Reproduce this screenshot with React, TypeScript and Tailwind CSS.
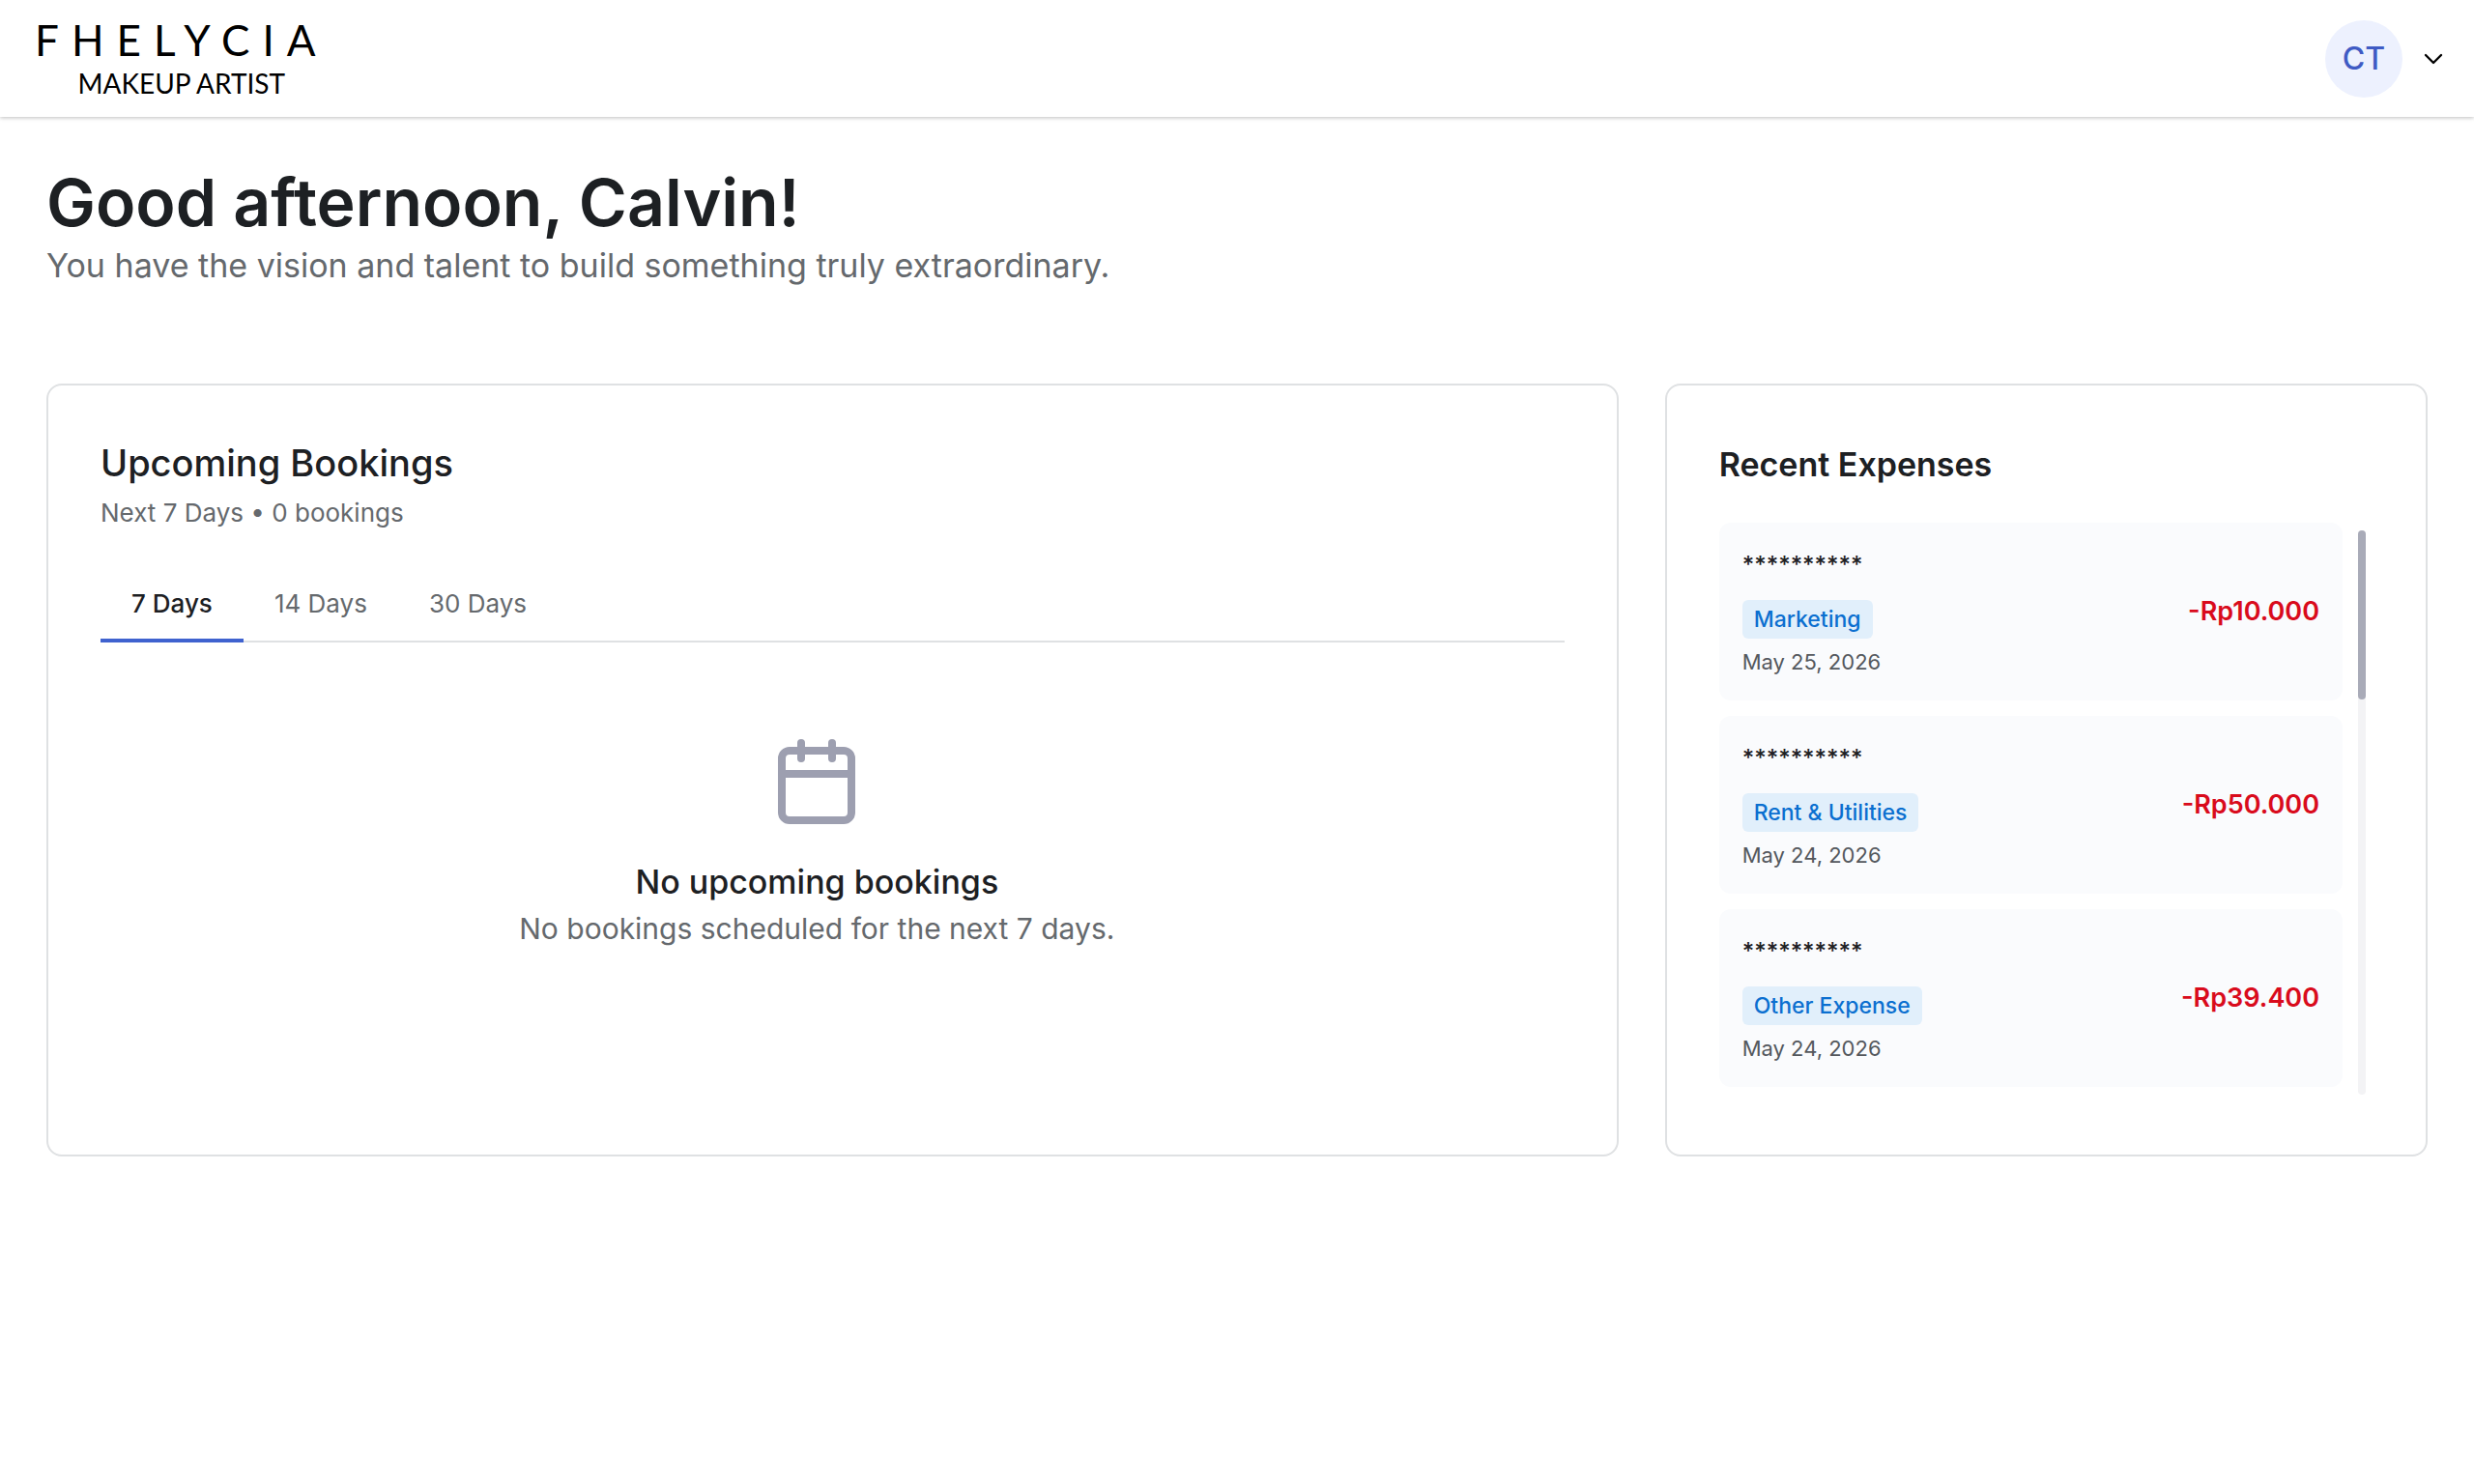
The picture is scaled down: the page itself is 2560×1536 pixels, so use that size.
import React, { useState } from "react";
import { Calendar, ChevronDown } from "lucide-react";

interface Expense {
  id: number;
  name: string;
  category: string;
  date: string;
  amount: string;
}

const RANGES = [7, 14, 30];

const EXPENSES: Expense[] = [
  { id: 1, name: "**********", category: "Marketing", date: "May 25, 2026", amount: "-Rp10.000" },
  { id: 2, name: "**********", category: "Rent & Utilities", date: "May 24, 2026", amount: "-Rp50.000" },
  { id: 3, name: "**********", category: "Other Expense", date: "May 24, 2026", amount: "-Rp39.400" },
];

const card = "rounded-2xl border-2 border-[#dfe1e3] bg-white p-[54px]";

const Header: React.FC = () => (
  <header className="flex h-[121px] items-center justify-between bg-white pl-9 pr-[26px] shadow-[0_1px_4px_rgba(0,0,0,0.25)]">
    <a href="#" className="flex flex-col items-center font-['Lato',sans-serif] text-black">
      <span className="text-[44px] leading-[50px] tracking-[13px]">FHELYCIA</span>
      <span className="text-[28px] leading-10">MAKEUP ARTIST</span>
    </a>
    <button type="button" aria-label="Account menu" className="flex items-center gap-4">
      <span className="flex size-20 items-center justify-center rounded-full bg-[#edf1fe] text-[32px] font-medium text-[#3f5bc4]">
        CT
      </span>
      <ChevronDown className="size-8 text-black" strokeWidth={1.75} />
    </button>
  </header>
);

const UpcomingBookings: React.FC = () => {
  const [days, setDays] = useState(7);

  return (
    <section className={`${card} col-span-2 flex flex-col`}>
      <h2 className="text-[38px] font-medium leading-[52px] text-[#1d2023]">Upcoming Bookings</h2>
      <p className="mt-1.5 text-[26px] leading-10 text-[#65696d]">Next {days} Days • 0 bookings</p>

      <div role="tablist" className="mt-8 flex border-b-2 border-[#dfe1e3]">
        {RANGES.map((range) => (
          <button
            key={range}
            type="button"
            role="tab"
            aria-selected={range === days}
            onClick={() => setDays(range)}
            className={`-mb-0.5 border-b-4 px-8 pb-4 pt-[22px] text-[26px] leading-10 ${
              range === days
                ? "border-[#3f62cf] font-medium text-[#1d2023]"
                : "border-transparent text-[#65696d]"
            }`}
          >
            {range} Days
          </button>
        ))}
      </div>

      {/* Empty state */}
      <div className="mt-24 flex flex-col items-center pr-8 text-center">
        <Calendar className="size-24 text-[#9d9fb0]" />
        <h3 className="mt-8 text-[34px] font-medium leading-[48px] text-[#1d2023]">
          No upcoming bookings
        </h3>
        <p className="text-[30px] leading-[48px] text-[#65696d]">
          No bookings scheduled for the next {days} days.
        </p>
      </div>
    </section>
  );
};

const ExpenseItem: React.FC<{ expense: Expense }> = ({ expense }) => (
  <li className="flex items-center justify-between rounded-xl bg-[#fafbfd] p-6">
    <div className="flex flex-col items-start">
      <span className="text-2xl font-medium leading-10 text-[#1d2023]">{expense.name}</span>
      <span className="mt-4 rounded-md bg-[#e1effb] px-3 text-[23px] font-medium leading-10 text-[#0b6fd0]">
        {expense.category}
      </span>
      <span className="mt-2 text-[22px] leading-8 text-[#54585d]">{expense.date}</span>
    </div>
    <span className="text-[27px] font-semibold text-[#d90b1c]">{expense.amount}</span>
  </li>
);

const RecentExpenses: React.FC = () => (
  <section className={card}>
    <h2 className="text-[34px] font-semibold leading-[56px] text-[#1d2023]">Recent Expenses</h2>
    <div className="mt-8 flex gap-4 pr-2">
      <ul className="flex flex-1 flex-col gap-4">
        {EXPENSES.map((expense) => (
          <ExpenseItem key={expense.id} expense={expense} />
        ))}
      </ul>
      {/* Scroll track */}
      <div className="mt-2 -mb-2 w-2 rounded-full bg-[#f3f3f5]">
        <div className="h-[30%] rounded-full bg-[#a9abb8]" />
      </div>
    </div>
  </section>
);

const App: React.FC = () => (
  <div className="min-h-screen bg-white font-['Inter',sans-serif]">
    <Header />
    <main className="px-12 pt-12">
      <h1 className="text-[68px] font-semibold leading-[80px] text-[#1d2023]">
        Good afternoon, Calvin!
      </h1>
      <p className="text-[34px] leading-[52px] text-[#65696d]">
        You have the vision and talent to build something truly extraordinary.
      </p>
      <div className="mt-24 grid min-h-[800px] grid-cols-3 gap-12">
        <UpcomingBookings />
        <RecentExpenses />
      </div>
    </main>
  </div>
);

export default App;
